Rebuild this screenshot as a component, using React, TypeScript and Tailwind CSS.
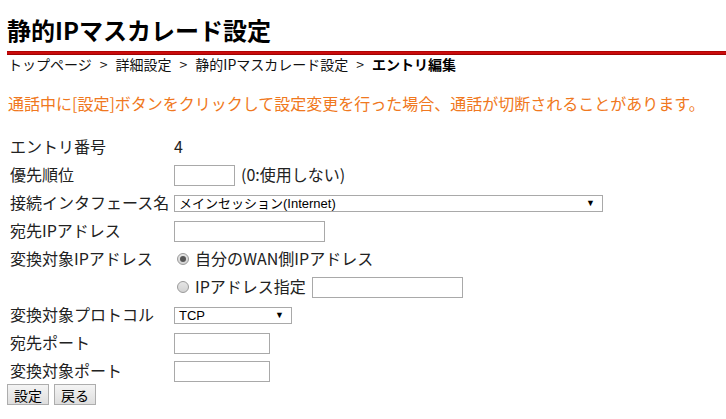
import React from "react";

const labelFont = "font-['Noto_Sans_CJK_JP','Noto_Sans',sans-serif]";

function TextBox({ w }: { w: string }) {
  return <div className={`${w} h-[21px] border border-[#a9a9a9] bg-white`} />;
}

function SelectBox({ w, text }: { w: string; text: string }) {
  return (
    <div
      className={`${w} h-[17px] border border-[#a9a9a9] bg-white flex items-center justify-between pl-[4px] pr-[7px] font-['Liberation_Sans','Noto_Sans_CJK_JP',sans-serif] text-[13px] leading-none text-black`}
    >
      <span>{text}</span>
      <span className="text-[9px]">▼</span>
    </div>
  );
}

function Radio({ checked }: { checked?: boolean }) {
  return (
    <div className="w-[12px] h-[12px] rounded-full border border-[#9a9a9a] bg-gradient-to-b from-[#e6e6e6] to-[#d2d2d2] flex items-center justify-center">
      {checked && <div className="w-[6px] h-[6px] rounded-full bg-[#555]" />}
    </div>
  );
}

function Row({ label, children }: { label?: string; children: React.ReactNode }) {
  return (
    <div className="flex h-[28px] items-center">
      <div className="w-[167px] pl-[3px] text-[16px] -mt-[2px]">{label}</div>
      <div className="flex items-center">{children}</div>
    </div>
  );
}

function Btn({ children }: { children: React.ReactNode }) {
  return (
    <button className="h-[21px] px-[6px] border border-[#adadad] bg-gradient-to-b from-[#f4f4f4] to-[#dedede] text-[14px] leading-none text-black">
      {children}
    </button>
  );
}

function Sep() {
  return <span className="mx-[8px]">&gt;</span>;
}

export default function App() {
  return (
    <div className={`${labelFont} w-[726px] h-[419px] bg-white text-[#222] pl-[7px] overflow-hidden`}>
      <h1 className="mt-[16px] h-[28px] text-[24px] leading-[28px] font-bold text-black">
        静的IPマスカレード設定
      </h1>
      <div className="mt-[7px] h-[4px] bg-gradient-to-b from-[#a00000] via-[#dd1010] to-[#8a0000]" />
      <div className="h-[18px] text-[14px] leading-[18px] pl-[1px] text-[#111]">
        トップページ<Sep />詳細設定<Sep />静的IPマスカレード設定<Sep />
        <span className="font-bold text-black">エントリ編集</span>
      </div>
      <p className="mt-[20px] h-[20px] text-[16px] leading-[20px] pl-[1px] text-[#f07820]">
        通話中に[設定]ボタンをクリックして設定変更を行った場合、通話が切断されることがあります。
      </p>
      <div className="mt-[20px]">
        <Row label="エントリ番号">
          <span className="text-[16px] -mt-[2px]">4</span>
        </Row>
        <Row label="優先順位">
          <TextBox w="w-[61px]" />
          <span className="ml-[6px] text-[16px] -mt-[2px]">(0:使用しない)</span>
        </Row>
        <Row label="接続インタフェース名">
          <SelectBox w="w-[429px]" text="メインセッション(Internet)" />
        </Row>
        <Row label="宛先IPアドレス">
          <TextBox w="w-[151px]" />
        </Row>
        <Row label="変換対象IPアドレス">
          <div className="ml-[3px] flex items-center gap-[6px] text-[16px]">
            <Radio checked />
            <span className="-mt-[2px]">自分のWAN側IPアドレス</span>
          </div>
        </Row>
        <Row>
          <div className="ml-[3px] flex items-center gap-[6px] text-[16px]">
            <Radio />
            <span className="-mt-[2px]">IPアドレス指定</span>
            <TextBox w="w-[151px]" />
          </div>
        </Row>
        <Row label="変換対象プロトコル">
          <SelectBox w="w-[118px]" text="TCP" />
        </Row>
        <Row label="宛先ポート">
          <TextBox w="w-[96px]" />
        </Row>
        <Row label="変換対象ポート">
          <TextBox w="w-[96px]" />
        </Row>
        <div className="flex gap-[5px] -mt-[1px]">
          <Btn>設定</Btn>
          <Btn>戻る</Btn>
        </div>
      </div>
    </div>
  );
}
